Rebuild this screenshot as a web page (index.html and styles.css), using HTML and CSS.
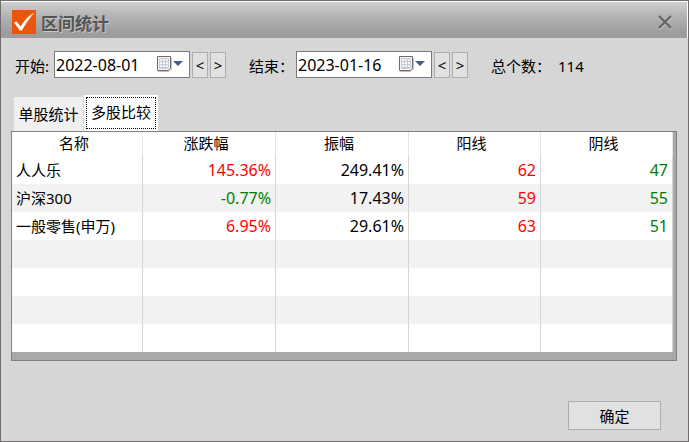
FILE: index.html
```html
<!DOCTYPE html>
<html lang="zh-CN">
<head>
<meta charset="utf-8">
<title>区间统计</title>
<link rel="stylesheet" href="styles.css">
</head>
<body>
<main class="dialog">
  <header class="titlebar">
    <svg class="logo" viewBox="0 0 24 24" aria-hidden="true">
      <rect width="24" height="24" fill="#eb560b"/>
      <path d="M2 12.5 L4.5 11.5 L8.8 16.5 C12 11 16 6 22.5 2.5 C17.5 8 13.5 14 9.8 20.5 L8 20.5 Z" fill="#fff"/>
    </svg>
    <h1 class="title">区间统计</h1>
    <button class="close" type="button" aria-label="关闭">
      <svg viewBox="0 0 16 16" aria-hidden="true">
        <path d="M2.5 3 L14.5 15 M14.5 3 L2.5 15" stroke="#c6c6c6" stroke-width="2.4"/>
        <path d="M2 2 L14 14 M14 2 L2 14" stroke="#666" stroke-width="2.4"/>
      </svg>
    </button>
  </header>

  <form class="content">
    <div class="range">
      <div class="field">
        <label class="label" for="start">开始:</label>
        <div class="datebox">
          <input class="date" id="start" type="text" value="2022-08-01">
          <button class="picker" type="button" aria-label="选择开始日期">
            <svg viewBox="0 0 27 17" aria-hidden="true">
              <path d="M1 15.5 H12 L14.5 13 V2" fill="none" stroke="#c4bfbd"/>
              <path d="M.5 .5 H13.5 V12 L11.5 14.5 H.5 Z" fill="#f6f7f9" stroke="#73696a"/>
              <path d="M2 2 H12 V11 L10 13 H2 Z" fill="#c3ccd8"/>
              <path d="M3 3 h2 v2 h-2 z M6 3 h2 v2 h-2 z M9 3 h2 v2 h-2 z M3 6 h2 v2 h-2 z M6 6 h2 v2 h-2 z M9 6 h2 v2 h-2 z M3 9 h2 v2 h-2 z M6 9 h2 v2 h-2 z M9 9 h2 v2 h-2 z" fill="#f4f6f8"/>
              <path d="M16 5 H26 L21 10 Z" fill="#465d8c"/>
            </svg>
          </button>
        </div>
        <button class="step" type="button">&lt;</button>
        <button class="step" type="button">&gt;</button>
      </div>
      <div class="field">
        <label class="label wide" for="end">结束：</label>
        <div class="datebox">
          <input class="date" id="end" type="text" value="2023-01-16">
          <button class="picker" type="button" aria-label="选择结束日期">
            <svg viewBox="0 0 27 17" aria-hidden="true">
              <path d="M1 15.5 H12 L14.5 13 V2" fill="none" stroke="#c4bfbd"/>
              <path d="M.5 .5 H13.5 V12 L11.5 14.5 H.5 Z" fill="#f6f7f9" stroke="#73696a"/>
              <path d="M2 2 H12 V11 L10 13 H2 Z" fill="#c3ccd8"/>
              <path d="M3 3 h2 v2 h-2 z M6 3 h2 v2 h-2 z M9 3 h2 v2 h-2 z M3 6 h2 v2 h-2 z M6 6 h2 v2 h-2 z M9 6 h2 v2 h-2 z M3 9 h2 v2 h-2 z M6 9 h2 v2 h-2 z M9 9 h2 v2 h-2 z" fill="#f4f6f8"/>
              <path d="M16 5 H26 L21 10 Z" fill="#465d8c"/>
            </svg>
          </button>
        </div>
        <button class="step" type="button">&lt;</button>
        <button class="step" type="button">&gt;</button>
      </div>
      <p class="total"><span>总个数：</span><output>114</output></p>
    </div>

    <div class="tabs" role="tablist">
      <button class="tab" type="button" role="tab" aria-selected="false">单股统计</button>
      <button class="tab active" type="button" role="tab" aria-selected="true">多股比较</button>
    </div>

    <div class="panel">
      <table class="grid">
        <colgroup><col class="name"><col class="percent"><col class="percent"><col><col></colgroup>
        <thead>
          <tr><th>名称</th><th>涨跌幅</th><th>振幅</th><th>阳线</th><th>阴线</th></tr>
        </thead>
        <tbody>
          <tr><td>人人乐</td><td class="up">145.36%</td><td>249.41%</td><td class="up">62</td><td class="down">47</td></tr>
          <tr><td>沪深300</td><td class="down">-0.77%</td><td>17.43%</td><td class="up">59</td><td class="down">55</td></tr>
          <tr><td>一般零售(申万)</td><td class="up">6.95%</td><td>29.61%</td><td class="up">63</td><td class="down">51</td></tr>
          <tr><td></td><td></td><td></td><td></td><td></td></tr>
          <tr><td></td><td></td><td></td><td></td><td></td></tr>
          <tr><td></td><td></td><td></td><td></td><td></td></tr>
          <tr><td></td><td></td><td></td><td></td><td></td></tr>
        </tbody>
      </table>
    </div>

    <footer class="actions">
      <button class="ok" type="button">确定</button>
    </footer>
  </form>
</main>
</body>
</html>
```
FILE: styles.css
```css
* {
  box-sizing: border-box;
}

body {
  margin: 0;
  background: #d6d6d6;
  color: #000;
  font: 15px/20px "Noto Sans", "Noto Sans CJK SC", sans-serif;
}

button,
input {
  margin: 0;
  padding: 0;
  border: 0;
  border-radius: 0;
  color: inherit;
  font: inherit;
}

.dialog {
  display: flex;
  flex-direction: column;
  min-height: 100vh;
  border: 1px solid #706c70;
}

.titlebar {
  display: flex;
  align-items: center;
  height: 37px;
  padding: 4px 14px 0 11px;
  border-top: 1px solid #fff;
  border-right: 1px solid #fff;
  background: linear-gradient(#cfcfcf, #b3b3b3 40%, #9d9d9d 85%, #9d9d9d);
}

.logo {
  width: 24px;
  height: 24px;
}

.title {
  flex: 1;
  margin: 0;
  padding: 3px 0 0 5px;
  color: #555;
  font-size: 17px;
  line-height: 24px;
  text-shadow: 1px 1px 0 #c8c8c8;
}

.close {
  width: 16px;
  height: 16px;
  background: none;
}

.close svg {
  display: block;
}

.content {
  display: flex;
  flex: 1;
  flex-direction: column;
  padding: 13px 11px 11px 10px;
}

.range {
  display: flex;
  gap: 23px;
  padding-left: 4px;
}

.field {
  display: flex;
  align-items: center;
  gap: 2px;
}

.label {
  width: 37px;
  padding-top: 2px;
  white-space: nowrap;
}

.label.wide {
  width: 45px;
}

.datebox {
  display: flex;
  align-items: center;
  width: 136px;
  height: 27px;
  border: 1px solid #7a7a7a;
  background: #fff;
}

.date {
  flex: 1;
  min-width: 0;
  height: 25px;
  padding-left: 1px;
  background: none;
  font-size: 16px;
}

.picker {
  width: 27px;
  height: 17px;
  margin-right: 5px;
  background: none;
}

.picker svg {
  display: block;
}

.step {
  width: 16px;
  height: 26px;
  border: 1px solid #adadad;
  background: #e1e1e1;
}

.total {
  display: flex;
  gap: 7px;
  margin: 0;
  padding-top: 5px;
}

.tabs {
  display: flex;
  align-items: flex-end;
  gap: 1px;
  margin-top: 17px;
  padding-left: 3px;
}

.tab {
  width: 69px;
  height: 34px;
  background: #f0f0f0;
}

.tab.active {
  width: 74px;
  height: 36px;
  padding-bottom: 3px;
  background: #fff;
  outline: 1px dotted #000;
  outline-offset: -3px;
}

.panel {
  padding: 0 3px 8px 0;
  border: 1px solid #808080;
  background: #a9a9a9;
}

.grid {
  width: 100%;
  border-collapse: separate;
  border-spacing: 0;
  table-layout: fixed;
  background: #fff;
}

.name {
  width: 131px;
}

.percent {
  width: 133px;
}

.grid th,
.grid td {
  height: 28px;
  padding: 0 4px;
  border-right: 1px solid #d6d6d6;
  font-size: 16px;
  font-weight: 400;
  text-align: right;
  white-space: nowrap;
}

.grid th {
  height: 24px;
  padding: 0 6px 2px 0;
  border-right-color: #e5e5e5;
  font-size: 15px;
  text-align: center;
}

.grid td:first-child {
  font-size: 15px;
  text-align: left;
}

.grid tbody tr:nth-child(even) {
  background: #f2f2f2;
}

.up {
  color: #f00;
}

.down {
  color: #008000;
}

.actions {
  display: flex;
  justify-content: flex-end;
  margin-top: auto;
  padding-right: 16px;
}

.ok {
  width: 93px;
  height: 29px;
  border: 1px solid #adadad;
  background: #e1e1e1;
}
```
